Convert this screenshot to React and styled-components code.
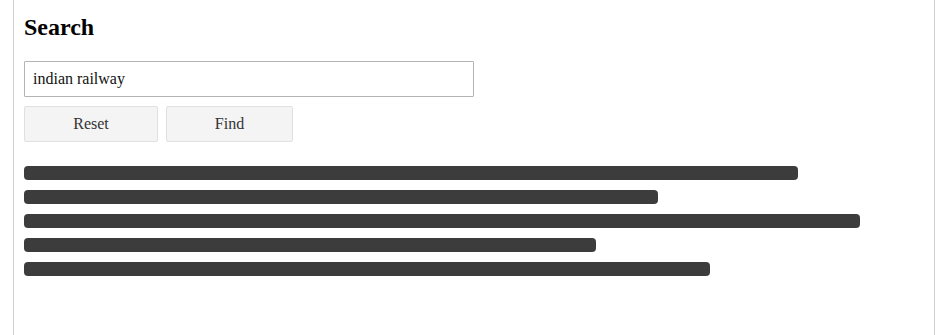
import React from "react";
import styled, { createGlobalStyle } from "styled-components";

const GlobalStyle = createGlobalStyle`
  body {
    margin: 0;
    background: #fff;
    font-family: "Liberation Serif", "Times New Roman", serif;
  }
`;

const lines = [774, 634, 836, 572, 686];

const App = () => {
  return (
    <>
      <GlobalStyle />
      <Panel>
        <Title>Search</Title>
        <SearchInput type="text" defaultValue="indian railway" />
        <Actions>
          <Button width={134}>Reset</Button>
          <Button width={127}>Find</Button>
        </Actions>
        <Skeleton>
          {lines.map((w, i) => (
            <Bar key={i} style={{ width: w }} />
          ))}
        </Skeleton>
      </Panel>
    </>
  );
};

const Panel = styled.div`
  margin: 0 14px 0 13px;
  min-height: 335px;
  box-sizing: border-box;
  border-left: 1px solid #cfcfcf;
  border-right: 1px solid #cfcfcf;
  padding: 13px 10px 20px 10px;
`;

const Title = styled.h2`
  margin: 0 0 20px 0;
  font-size: 24px;
  font-weight: bold;
  color: #000;
  line-height: 28px;
`;

const SearchInput = styled.input`
  display: block;
  box-sizing: border-box;
  width: 450px;
  height: 36px;
  padding: 0 8px;
  border: 1px solid #b4b4b4;
  border-radius: 1px;
  font-family: "Liberation Serif", "Times New Roman", serif;
  font-size: 16px;
  color: #111;
  outline: none;
`;

const Actions = styled.div`
  display: flex;
  gap: 8px;
  margin-top: 9px;
`;

const Button = styled.button`
  box-sizing: border-box;
  width: ${(p) => p.width}px;
  height: 36px;
  background: #f4f4f4;
  border: 1px solid #e0e0e0;
  border-radius: 2px;
  font-family: "Liberation Serif", "Times New Roman", serif;
  font-size: 16px;
  color: #333;
  cursor: pointer;
`;

const Skeleton = styled.div`
  display: flex;
  flex-direction: column;
  gap: 10px;
  margin-top: 24px;
`;

const Bar = styled.div`
  height: 14px;
  background: #3c3c3c;
  border-radius: 4px;
`;

export default App;
